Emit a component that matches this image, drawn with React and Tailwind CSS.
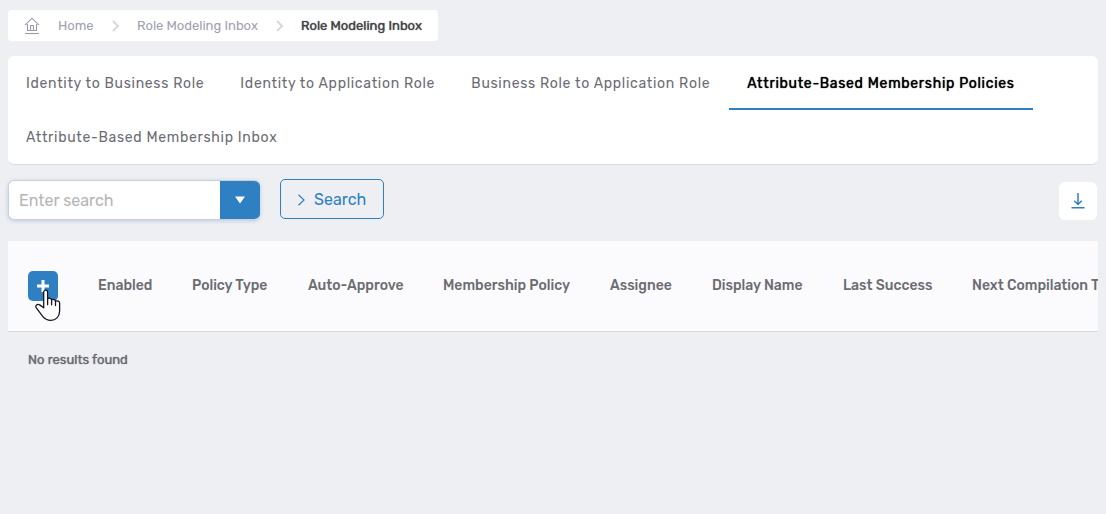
import React from "react";

const tabs = [
  { label: "Identity to Business Role", width: "min-w-[214px]" },
  { label: "Identity to Application Role", width: "min-w-[231px]" },
  { label: "Business Role to Application Role", width: "min-w-[276px]" },
  { label: "Attribute-Based Membership Policies", width: "min-w-[303px]", active: true },
  { label: "Attribute-Based Membership Inbox", width: "min-w-[288px]" },
];

const columns = [
  { label: "Enabled", width: "w-[94px]" },
  { label: "Policy Type", width: "w-[116px]" },
  { label: "Auto-Approve", width: "w-[135px]" },
  { label: "Membership Policy", width: "w-[167px]" },
  { label: "Assignee", width: "w-[102px]" },
  { label: "Display Name", width: "w-[131px]" },
  { label: "Last Success", width: "w-[129px]" },
  { label: "Next Compilation Time", width: "w-[190px]" },
];

function HomeIcon() {
  return (
    <svg width="16" height="18" viewBox="0 0 16 18" fill="none" stroke="#9a9aac" strokeWidth="1.1" aria-hidden="true">
      <path d="M1 8.200 8 1.200l7 7M3.500 7v6.500h9V7M6.500 13.500V8.500h3v5" />
      <path d="M1 16.500h14" />
    </svg>
  );
}

function Separator() {
  return (
    <svg width="8" height="12" viewBox="0 0 8 12" fill="none" stroke="#d7d8df" strokeWidth="2" aria-hidden="true">
      <path d="M1 1l5 5-5 5" />
    </svg>
  );
}

function HandPointer() {
  return (
    <svg
      className="pointer-events-none absolute left-[7px] top-[18px]"
      width="26"
      height="33"
      viewBox="0 0 26 33"
      fill="#fff"
      stroke="#15151f"
      strokeWidth="1.3"
      strokeLinejoin="round"
      strokeLinecap="round"
      aria-hidden="true"
    >
      <path d="M8.700 18.800V3.200C8.700.4 12.600.4 12.600 3.200v6.500c1.500-1 3.800-.5 4 1.100 1.500-.8 3.600-.3 3.900 1.200 1.700-.6 4.100.2 4.100 2.100v8.200c0 5.600-3.900 9-8.800 9-3.900 0-6.300-1.600-8.300-4.200L1.500 19.200C-.4 16.300 2.400 14.400 5 16.100z" />
      <path d="M12.600 9.700v6M16.600 10.800v5M20.500 12v4.500" fill="none" />
    </svg>
  );
}

export default function App() {
  return (
    <div className="min-h-screen overflow-hidden bg-[#eeeff3] px-2 pt-2.5 font-['Rubik','Roboto',sans-serif] text-[#6b6c73]">
      <nav aria-label="Breadcrumb" className="flex">
        <ol className="flex h-[31px] items-center rounded-sm bg-white px-4 text-[13px] text-[#a0a0ae]">
          <li className="flex w-[88px] items-center gap-[18px]">
            <HomeIcon />
            <a href="#home">Home</a>
          </li>
          <li className="flex w-[164px] items-center gap-[17px]">
            <Separator />
            <a href="#inbox" className="whitespace-nowrap">Role Modeling Inbox</a>
          </li>
          <li className="flex items-center gap-[17px] text-[#45454b]">
            <Separator />
            <span aria-current="page" className="whitespace-nowrap [text-shadow:0_0_1px_currentColor]">Role Modeling Inbox</span>
          </li>
        </ol>
      </nav>

      <nav aria-label="Sections" className="mt-[15px] flex flex-wrap rounded-md border-b border-[#d9dbe0] bg-white">
        {tabs.map((tab) => (
          <a
            key={tab.label}
            href="#section"
            aria-current={tab.active ? "true" : undefined}
            className={`flex h-[54px] items-center whitespace-nowrap border-b-2 px-[18px] pt-1 text-sm tracking-wider ${tab.width} ${
              tab.active ? "border-[#2f80c2] text-black [text-shadow:0_0_1px_currentColor]" : "border-transparent"
            }`}
          >
            {tab.label}
          </a>
        ))}
      </nav>

      <form className="mt-3.5 flex items-start" onSubmit={(e) => e.preventDefault()}>
        <div className="mt-px flex h-10 w-[252px] overflow-hidden rounded-md border border-r-0 border-[#cbd0d8] bg-white shadow-[0_1px_4px_#b9cbe0]">
          <input
            type="text"
            aria-label="Enter search"
            placeholder="Enter search"
            className="min-w-0 flex-1 px-2.5 pt-0.5 text-base outline-none placeholder:text-[#b5b5b5]"
          />
          <button type="button" aria-label="Search options" className="flex w-10 items-center justify-center bg-[#2f80c2]">
            <svg width="10" height="8" viewBox="0 0 10 8" fill="#fff" aria-hidden="true">
              <path d="M0 .5h10L5 7.500z" />
            </svg>
          </button>
        </div>
        <button
          type="submit"
          className="ml-5 flex h-10 w-[104px] items-center gap-2 rounded-[5px] border border-[#2f80c2] px-4 pt-0.5 text-base text-[#2f80c2]"
        >
          <svg width="9" height="12" viewBox="0 0 9 12" fill="none" stroke="currentColor" strokeWidth="1.200" aria-hidden="true">
            <path d="M1.500.7 7 6l-5.500 5.300" />
          </svg>
          Search
        </button>
        <button type="button" aria-label="Download" className="ml-auto mr-px mt-[3px] flex h-[38px] w-[38px] items-center justify-center rounded-md bg-white">
          <svg width="14" height="16" viewBox="0 0 14 16" fill="none" stroke="#2f80c2" strokeWidth="1.500" aria-hidden="true">
            <path d="M7 0v11M3.300 7.800 7 11.500l3.700-3.700M.5 14.800h13" />
          </svg>
        </button>
      </form>

      <div className="mt-[21px] overflow-hidden">
        <table className="w-[1134px] table-fixed border-collapse text-left text-sm">
          <thead>
            <tr className="h-[90px] border-b border-[#d7d8dc] bg-[#fbfbfd]">
              <th className="w-[70px] pl-5">
                <div className="relative h-[30px] w-[30px]">
                  <button type="button" aria-label="Add policy" className="flex h-full w-full items-center justify-center rounded-[5px] bg-[#2f80c2]">
                    <svg width="12" height="12" viewBox="0 0 12 12" stroke="#fff" strokeWidth="3" aria-hidden="true">
                      <path d="M6 0v12M0 6h12" />
                    </svg>
                  </button>
                  <HandPointer />
                </div>
              </th>
              {columns.map((column) => (
                <th key={column.label} className={`whitespace-nowrap pl-5 font-medium ${column.width}`}>
                  {column.label}
                </th>
              ))}
            </tr>
          </thead>
          <tbody>
            <tr className="h-[58px]">
              <td colSpan={9} className="px-5 text-[13px] [text-shadow:0_0_1px_currentColor]">No results found</td>
            </tr>
          </tbody>
        </table>
      </div>
    </div>
  );
}
